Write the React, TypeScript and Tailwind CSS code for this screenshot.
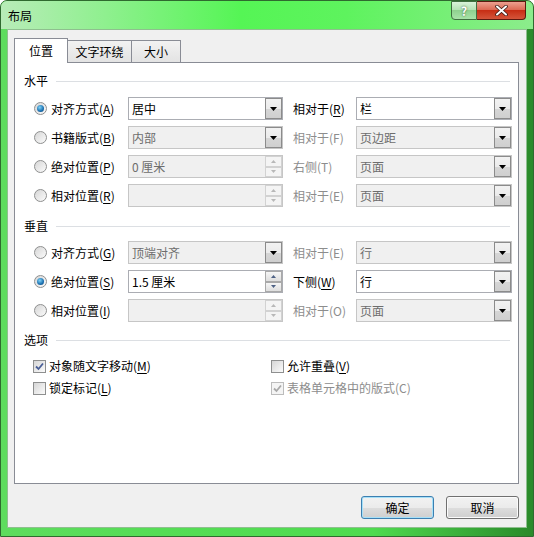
import React from "react";

type Acc = { text: string; acc?: string; disabled?: boolean };

const Label = ({ text, acc, disabled }: Acc) => {
  const i = acc ? text.indexOf("(" + acc + ")") : -1;
  return (
    <span className={disabled ? "text-[#8d8d8d]" : "text-black"}>
      {i < 0 || disabled ? (
        text
      ) : (
        <>
          {text.slice(0, i + 1)}
          <span className="underline underline-offset-2">{acc}</span>
          {text.slice(i + 2)}
        </>
      )}
    </span>
  );
};

const Radio = ({ checked, disabled }: { checked?: boolean; disabled?: boolean }) => (
  <span
    className={`flex h-[13px] w-[13px] shrink-0 items-center justify-center rounded-full border ${
      disabled ? "border-[#bcbcbc] bg-[#f4f4f4]" : "border-[#8e8f8f] bg-[linear-gradient(135deg,#d6d6d6,#fbfbfb)]"
    }`}
  >
    {checked && (
      <span className="h-[7px] w-[7px] rounded-full bg-[radial-gradient(circle_at_40%_35%,#7fd3f7,#1a6fb0_60%,#0d3f6e)]" />
    )}
  </span>
);

const Check = ({ checked, disabled }: { checked?: boolean; disabled?: boolean }) => (
  <span
    className={`flex h-[13px] w-[13px] shrink-0 items-center justify-center border ${
      disabled ? "border-[#bcbcbc] bg-[#f4f4f4]" : "border-[#8e8f8f] bg-[linear-gradient(135deg,#d6d6d6,#fbfbfb)]"
    }`}
  >
    {checked && (
      <svg width="9" height="9" viewBox="0 0 9 9">
        <path
          d="M1 4.5 L3.5 7 L8 1.5"
          fill="none"
          stroke={disabled ? "#a8a8a8" : "#4a5f97"}
          strokeWidth="1.8"
        />
      </svg>
    )}
  </span>
);

const Combo = ({ value, disabled, w }: { value: string; disabled?: boolean; w: string }) => (
  <div
    className={`flex h-[23px] ${w} border ${
      disabled ? "border-[#c6c6c6] bg-[#f0f0f0] text-[#6d6d6d]" : "border-[#abadb3] bg-white text-black"
    }`}
  >
    <div className="flex flex-1 items-center pl-[3px]">{value}</div>
    <div className="flex w-[17px] items-center justify-center border border-[#8b8b8b] bg-[linear-gradient(#f2f2f2,#ebebeb_50%,#d6d6d6_51%,#cfcfcf)]">
      <svg width="7" height="4" viewBox="0 0 7 4">
        <path d="M0 0h7L3.5 4z" fill="#000" />
      </svg>
    </div>
  </div>
);

const Spin = ({ value, disabled, w }: { value: string; disabled?: boolean; w: string }) => {
  const c = disabled ? "#b8b8b8" : "#4d6185";
  return (
    <div
      className={`flex h-[23px] ${w} border ${
        disabled ? "border-[#c6c6c6] bg-[#f0f0f0] text-[#6d6d6d]" : "border-[#abadb3] bg-white text-black"
      }`}
    >
      <div className="flex flex-1 items-center pl-[3px]">{value}</div>
      <div className="flex w-[17px] flex-col">
        {[0, 1].map((n) => (
          <div
            key={n}
            className={`flex flex-1 items-center justify-center border ${
              disabled ? "border-[#d2d2d2] bg-[#f4f4f4]" : "border-[#a9a9a9] bg-[linear-gradient(#f6f6f6,#dedede)]"
            }`}
          >
            <svg width="5" height="3" viewBox="0 0 5 3">
              <path d={n === 0 ? "M0 3h5L2.5 0z" : "M0 0h5L2.5 3z"} fill={c} />
            </svg>
          </div>
        ))}
      </div>
    </div>
  );
};

type RowDef = {
  checked?: boolean;
  label: Acc;
  ctrl: { kind: "combo" | "spin"; value: string; disabled?: boolean };
  label2: Acc;
  combo: { value: string; disabled?: boolean };
};

const Row = ({ r }: { r: RowDef }) => (
  <div className="flex h-[23px] items-center pl-[19px]">
    <Radio checked={r.checked} />
    <div className="ml-[4px] w-[77px]">
      <Label {...r.label} />
    </div>
    {r.ctrl.kind === "combo" ? (
      <Combo value={r.ctrl.value} disabled={r.ctrl.disabled} w="w-[155px]" />
    ) : (
      <Spin value={r.ctrl.value} disabled={r.ctrl.disabled} w="w-[155px]" />
    )}
    <div className="ml-[10px] w-[63px]">
      <Label {...r.label2} />
    </div>
    <Combo value={r.combo.value} disabled={r.combo.disabled} w="w-[156px]" />
  </div>
);

const Header = ({ text }: { text: string }) => (
  <div className="flex h-[16px] items-center pl-[9px] pr-[8px]">
    <span>{text}</span>
    <div className="ml-[8px] h-px flex-1 bg-[#dcdfe3]" />
  </div>
);

const horizontal: RowDef[] = [
  {
    checked: true,
    label: { text: "对齐方式(A)", acc: "A" },
    ctrl: { kind: "combo", value: "居中" },
    label2: { text: "相对于(R)", acc: "R" },
    combo: { value: "栏" },
  },
  {
    label: { text: "书籍版式(B)", acc: "B" },
    ctrl: { kind: "combo", value: "内部", disabled: true },
    label2: { text: "相对于(F)", disabled: true },
    combo: { value: "页边距", disabled: true },
  },
  {
    label: { text: "绝对位置(P)", acc: "P" },
    ctrl: { kind: "spin", value: "0 厘米", disabled: true },
    label2: { text: "右侧(T)", disabled: true },
    combo: { value: "页面", disabled: true },
  },
  {
    label: { text: "相对位置(R)", acc: "R" },
    ctrl: { kind: "spin", value: "", disabled: true },
    label2: { text: "相对于(E)", disabled: true },
    combo: { value: "页面", disabled: true },
  },
];

const vertical: RowDef[] = [
  {
    label: { text: "对齐方式(G)", acc: "G" },
    ctrl: { kind: "combo", value: "顶端对齐", disabled: true },
    label2: { text: "相对于(E)", disabled: true },
    combo: { value: "行", disabled: true },
  },
  {
    checked: true,
    label: { text: "绝对位置(S)", acc: "S" },
    ctrl: { kind: "spin", value: "1.5 厘米" },
    label2: { text: "下侧(W)", acc: "W" },
    combo: { value: "行" },
  },
  {
    label: { text: "相对位置(I)", acc: "I" },
    ctrl: { kind: "spin", value: "", disabled: true },
    label2: { text: "相对于(O)", disabled: true },
    combo: { value: "页面", disabled: true },
  },
];

const TitleButtons = () => (
  <div className="ml-auto mr-[7px] flex h-[19px] items-stretch">
    <div className="flex w-[26px] items-center justify-center rounded-bl-[4px] border border-[#3f6e3f] bg-[linear-gradient(#d9f3d9,#b5e3b5_45%,#8fd18f_50%,#a8e3a8)] text-[12px] font-bold text-white [text-shadow:0_0_2px_#2d4d2d]">
      ?
    </div>
    <div className="flex w-[49px] items-center justify-center rounded-br-[4px] border border-l-0 border-[#5a1a10] bg-[linear-gradient(#eca08f,#dc6a55_45%,#c72e15_50%,#d4553a)]">
      <svg width="13" height="11" viewBox="0 0 13 11">
        <path d="M2 1.5 L11 9.5 M11 1.5 L2 9.5" stroke="#3a1a14" strokeWidth="3.6" strokeLinecap="round" />
        <path d="M2 1.5 L11 9.5 M11 1.5 L2 9.5" stroke="#fff" strokeWidth="2" strokeLinecap="round" />
      </svg>
    </div>
  </div>
);

export default function App() {
  return (
    <div className="flex h-[537px] w-[534px] flex-col rounded-t-[7px] border border-[#2f6a2f] bg-[linear-gradient(90deg,#5edc5e,#55dd55_30%,#4fdb4f_70%,#2a8a2a)] font-['Noto_Sans_CJK_SC',sans-serif] text-[12px] leading-[16px] text-black">
      <div className="flex h-[28px] items-start rounded-t-[6px] bg-[linear-gradient(90deg,#b8ecb8,#8ef08e_20%,#55f555_45%,#5ef35e_65%,#8cec8c)]">
        <span className="ml-[7px] mt-[7px]">布局</span>
        <TitleButtons />
      </div>
      <div className="mx-[6px] flex h-[499px] flex-col border border-[#8fbf8f] bg-[#f0f0f0] pl-[6px] pr-[7px] pt-[8px]">
        <div className="flex h-[24px] items-end">
          <div className="relative z-10 -mb-px flex h-[25px] w-[54px] items-center justify-center border border-b-0 border-[#898c95] bg-white">
            位置
          </div>
          <div className="flex h-[22px] w-[64px] items-center justify-center border border-l-0 border-b-0 border-[#898c95] bg-[linear-gradient(#f2f2f2,#e3e3e3)]">
            文字环绕
          </div>
          <div className="flex h-[22px] w-[49px] items-center justify-center border border-l-0 border-b-0 border-[#898c95] bg-[linear-gradient(#f2f2f2,#e3e3e3)]">
            大小
          </div>
        </div>
        <div className="flex h-[422px] flex-col border border-[#898c95] bg-white pt-[10px]">
          <Header text="水平" />
          <div className="mt-[8px] flex flex-col gap-[6px]">
            {horizontal.map((r, i) => (
              <Row key={i} r={r} />
            ))}
          </div>
          <div className="mt-[11px]">
            <Header text="垂直" />
          </div>
          <div className="mt-[7px] flex flex-col gap-[6px]">
            {vertical.map((r, i) => (
              <Row key={i} r={r} />
            ))}
          </div>
          <div className="mt-[10px]">
            <Header text="选项" />
          </div>
          <div className="mt-[10px] grid grid-cols-[238px_1fr] gap-y-[6px] pl-[18px]">
            <div className="flex items-center gap-[3px]">
              <Check checked />
              <Label text="对象随文字移动(M)" acc="M" />
            </div>
            <div className="flex items-center gap-[3px]">
              <Check />
              <Label text="允许重叠(V)" acc="V" />
            </div>
            <div className="flex items-center gap-[3px]">
              <Check />
              <Label text="锁定标记(L)" acc="L" />
            </div>
            <div className="flex items-center gap-[3px]">
              <Check checked disabled />
              <Label text="表格单元格中的版式(C)" disabled />
            </div>
          </div>
        </div>
        <div className="mt-[12px] flex justify-end gap-[12px]">
          <button className="h-[23px] w-[73px] rounded-[3px] border border-[#3c7fb1] bg-[linear-gradient(#f2f2f2,#ebebeb_50%,#dddddd_51%,#cfcfcf)] shadow-[inset_0_0_0_1px_#a6e0f8]">
            确定
          </button>
          <button className="h-[23px] w-[73px] rounded-[3px] border border-[#707070] bg-[linear-gradient(#f2f2f2,#ebebeb_50%,#dddddd_51%,#cfcfcf)] shadow-[inset_0_0_0_1px_#fbfbfb]">
            取消
          </button>
        </div>
      </div>
    </div>
  );
}
